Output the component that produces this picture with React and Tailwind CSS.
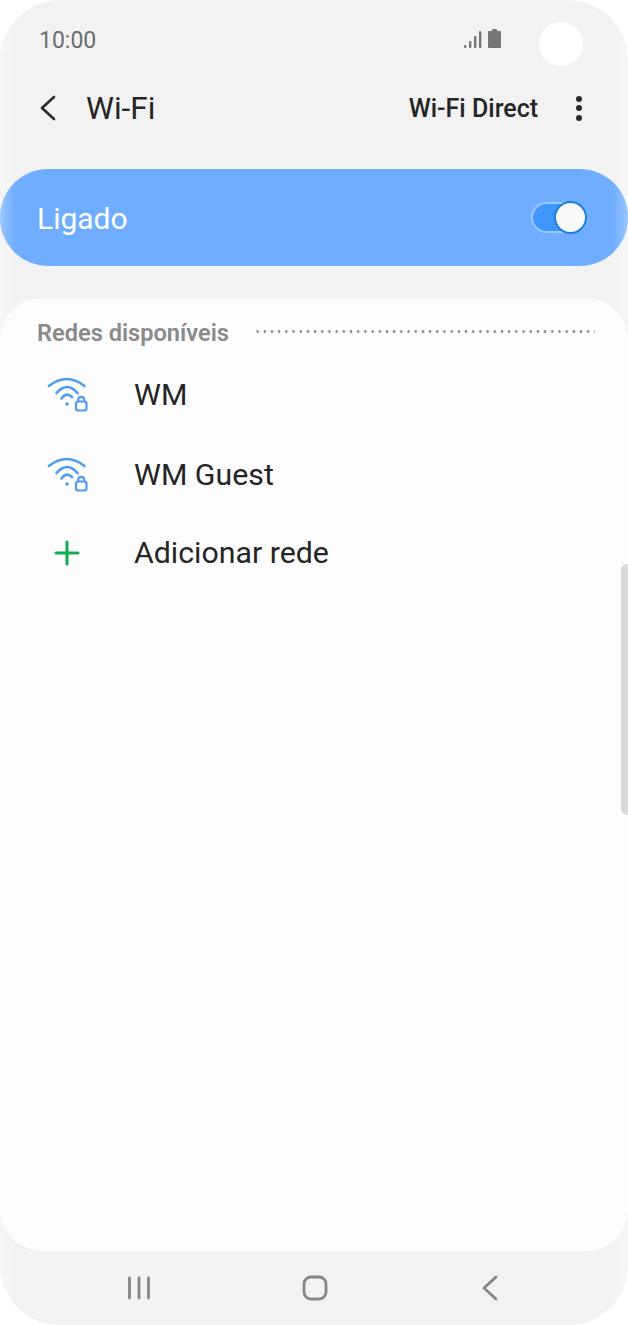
import React from 'react';

const WifiLock = () => (
  <svg width="42" height="36" viewBox="0 0 42 36" fill="none" stroke="#4f9cf5" strokeLinecap="round" aria-hidden="true">
    <path d="M3 9Q20.5 -5 38.5 9" strokeWidth="2.6" />
    <path d="M10.5 16Q21 4 31.5 16" strokeWidth="2.6" />
    <path d="M15.5 21.5Q20.5 14.5 26 20" strokeWidth="2.6" />
    <circle cx="21" cy="27" r="1.8" fill="#4f9cf5" stroke="none" />
    <rect x="30" y="24.5" width="10.5" height="9" rx="2.2" strokeWidth="2.2" />
    <path d="M32.2 24.5v-1.7a3 3 0 0 1 6 0v1.7" strokeWidth="2.2" />
  </svg>
);

const NetworkRow = ({ name, className }) => (
  <div className={`flex items-center ${className}`}>
    <div className="w-[134px] pl-[46px] flex items-center">
      <WifiLock />
    </div>
    <span className="text-[30.3px] leading-[36px] text-[#252525]">{name}</span>
  </div>
);

export default function App() {
  return (
    <div className="w-[628px] h-[1325px] bg-white font-['Roboto',sans-serif]">
      <div className="relative w-full h-full rounded-[60px] overflow-hidden bg-[#f2f2f2] flex flex-col">
        {/* Status bar */}
        <div className="h-[80px] pl-[39px] pr-[126px] pt-[25px] flex items-start justify-between">
          <span className="text-[23px] leading-[32px] text-[#6d6d6d]">10:00</span>
          <svg className="mt-[4px]" width="38" height="20" viewBox="0 0 38 20" aria-hidden="true">
            <g fill="#767676">
              <rect x="0" y="16" width="2.4" height="3" rx="1" />
              <rect x="5" y="12" width="2.4" height="7" rx="1" />
              <rect x="10" y="7" width="2.4" height="12" rx="1" />
              <rect x="15" y="2" width="2.4" height="17" rx="1" />
              <path d="M24 3a1 1 0 0 1 1-1h3V.8a.8.8 0 0 1 .8-.8h3.4a.8.8 0 0 1 .8.8V2h3a1 1 0 0 1 1 1v15a1 1 0 0 1-1 1H25a1 1 0 0 1-1-1z" />
            </g>
          </svg>
        </div>

        {/* Camera cut-out */}
        <div className="absolute left-[539px] top-[22px] w-[44px] h-[44px] rounded-full bg-white" />

        {/* Header */}
        <div className="h-[56px] pl-[36px] pr-[46px] flex items-center">
          <svg width="22" height="28" viewBox="0 0 22 28" fill="none" stroke="#2b2b2b" strokeWidth="2.6" strokeLinecap="round" strokeLinejoin="round" aria-hidden="true">
            <path d="M18 3L6 14l12 11" />
          </svg>
          <span className="ml-[28px] mt-[2px] text-[31.5px] leading-[40px] text-[#252525]">Wi-Fi</span>
          <span className="ml-auto mt-[2px] mr-[1px] text-[25px] leading-[32px] font-medium text-[#252525]">Wi-Fi Direct</span>
          <div className="ml-[37px] flex flex-col gap-[3.5px]">
            <span className="w-[6px] h-[6px] rounded-full bg-[#2b2b2b]" />
            <span className="w-[6px] h-[6px] rounded-full bg-[#2b2b2b]" />
            <span className="w-[6px] h-[6px] rounded-full bg-[#2b2b2b]" />
          </div>
        </div>

        {/* Ligado bar */}
        <div className="mt-[33px] h-[97px] rounded-[48px] bg-[#6eadff] pl-[37px] pr-[41px] flex items-center justify-between">
          <span className="mt-[2px] text-[30px] leading-[36px] text-white">Ligado</span>
          <div className="relative w-[56px] h-[31px] rounded-full bg-[#3f97fc] border-2 border-[#9ac8ff]">
            <div className="absolute right-[-2px] top-[-3px] w-[33px] h-[33px] rounded-full bg-[#fafafa] border-2 border-[#1a7fe0]" />
          </div>
        </div>

        {/* Network list */}
        <div className="mt-[32px] h-[953px] rounded-[42px] bg-[#fdfdfd] pt-[20px]">
          <div className="pl-[37px] pr-[33px] flex items-center">
            <span className="text-[23.6px] leading-[30px] font-semibold text-[#8a8a8a]">Redes disponíveis</span>
            <div className="ml-[25px] flex-1 mt-[-4px] h-[3px] bg-[radial-gradient(circle,#8f8f8f_1.2px,transparent_1.5px)] bg-[length:7.2px_3px]" />
          </div>
          <NetworkRow name="WM" className="mt-[29px]" />
          <NetworkRow name="WM Guest" className="mt-[44px]" />
          <div className="mt-[42px] flex items-center">
            <div className="w-[134px] pl-[54px]">
              <svg width="26" height="26" viewBox="0 0 26 26" stroke="#0fae4f" strokeWidth="3" strokeLinecap="round" aria-hidden="true">
                <path d="M13 2v22M2 13h22" />
              </svg>
            </div>
            <span className="text-[30.3px] leading-[36px] text-[#252525]">Adicionar rede</span>
          </div>
        </div>

        {/* Scrollbar */}
        <div className="absolute right-0 top-[564px] w-[7px] h-[251px] rounded-l-[6px] bg-[#cfcfcd]" />

        {/* Edge sheen of the curved screen */}
        <div className="absolute left-0 top-0 w-[16px] h-full bg-linear-to-r from-white/30 to-transparent pointer-events-none" />
        <div className="absolute right-0 top-0 w-[16px] h-full bg-linear-to-l from-white/30 to-transparent pointer-events-none" />

        {/* Nav bar */}
        <div className="flex-1 flex items-center pl-[127px]">
          <svg width="24" height="24" viewBox="0 0 24 24" stroke="#868686" strokeWidth="2.8" strokeLinecap="round" aria-hidden="true">
            <path d="M2.5 2v20M12 2v20M21.5 2v20" />
          </svg>
          <svg className="ml-[151px]" width="26" height="26" viewBox="0 0 26 26" fill="none" stroke="#868686" strokeWidth="2.8" aria-hidden="true">
            <rect x="2" y="2" width="22" height="22" rx="7" />
          </svg>
          <svg className="ml-[154px]" width="16" height="26" viewBox="0 0 16 26" fill="none" stroke="#868686" strokeWidth="2.8" strokeLinecap="round" strokeLinejoin="round" aria-hidden="true">
            <path d="M14 2L2 13l12 11" />
          </svg>
        </div>
      </div>
    </div>
  );
}
